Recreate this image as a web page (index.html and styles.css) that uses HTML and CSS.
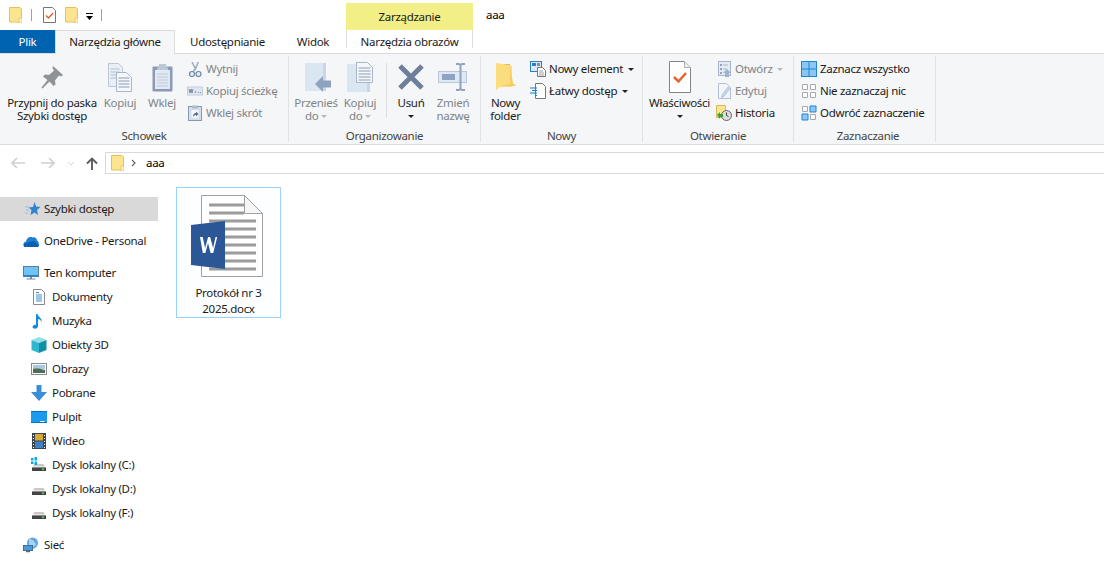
FILE: index.html
```html
<!DOCTYPE html>
<html lang="pl">
<head>
    <meta charset="UTF-8">
    <meta name="viewport" content="width=device-width, initial-scale=1.0">
    <title>aaa</title>
    <link rel="stylesheet" href="styles.css">
</head>
<body>

<svg class="icon-defs" aria-hidden="true">
    <symbol id="folder" viewBox="0 0 13 16">
        <path d="M.5.500h10.500l1.500 1.500v13H.5z" fill="#fde58f" stroke="#e2c063"/>
        <path d="M10 11h3v5h-3z" fill="#fff3c0" stroke="#e2c063" stroke-width=".8"/>
    </symbol>
    <symbol id="props" viewBox="0 0 13 16">
        <path d="M.5.500h9l3 3v12H.5z" fill="#fff" stroke="#777"/>
        <path d="M3 8.500l2.500 2.500L10 6" fill="none" stroke="#e8622c" stroke-width="1.500"/>
    </symbol>
    <symbol id="drive" viewBox="0 0 16 16">
        <path d="M2 9.500l1.500-2.500h9l1.500 2.500z" fill="#c9c9c9"/>
        <path d="M1 10h14v4H1z" fill="#444"/>
        <path d="M1 10h14v1H1z" fill="#8e8e8e"/>
        <path d="M11 11.500h2v1.500h-2z" fill="#5fd35f"/>
    </symbol>
</svg>

<header class="title-bar">
    <div class="qat">
        <svg class="qat-icon"><use href="#folder"/></svg>
        <span class="qat-sep"></span>
        <svg class="qat-icon"><use href="#props"/></svg>
        <svg class="qat-icon"><use href="#folder"/></svg>
        <svg class="qat-more" width="7" height="7" viewBox="0 0 7 7"><path d="M0 0h7v1H0zM0 3h7L3.500 7z" fill="#000"/></svg>
        <span class="qat-sep"></span>
    </div>
    <div class="context-title">Zarządzanie</div>
    <div class="window-title">aaa</div>
</header>

<nav class="tabs">
    <a class="tab tab-file">Plik</a>
    <a class="tab tab-home">Narzędzia główne</a>
    <a class="tab tab-share">Udostępnianie</a>
    <a class="tab tab-view">Widok</a>
    <a class="tab tab-context">Narzędzia obrazów</a>
</nav>

<section class="ribbon">
    <div class="group group-clipboard">
        <div class="group-body">
            <div class="big-btn btn-pin">
                <div class="big-icon">
                    <svg width="24" height="24" viewBox="0 0 24 24"><path d="M13 1l10 9-2 1.500-2-1-4 5 .5 4-2 1.500-4-4.500-7 7-1-1 6-7.500L3 11.500 5 9.500l4 .5 5-4.500-1.500-2.500z" fill="#8d9397"/></svg>
                </div>
                <span class="dark">Przypnij do paska<br>Szybki dostęp</span>
            </div>
            <div class="big-btn btn-copy off">
                <div class="big-icon">
                    <svg width="24" height="29" viewBox="0 0 24 29"><path d="M.5.500h10l4 4v19H.5z" fill="#eaeff6" stroke="#bcc8d8"/><path d="M2.500 6h9M2.500 9h9M2.500 12h9M2.500 15h9" stroke="#b3bfd0"/><path d="M8.500 9.500h10l5 5v14h-15z" fill="#f4f7fb" stroke="#a9b6c9"/><path d="M10.500 15h11M10.500 18h11M10.500 21h11M10.500 24h11" stroke="#8d9cb3"/></svg>
                </div>
                <span>Kopiuj</span>
            </div>
            <div class="big-btn btn-paste off">
                <div class="big-icon">
                    <svg width="21" height="29" viewBox="0 0 21 29"><rect x=".5" y="3.500" width="20" height="25" fill="#8b9ab5" rx="1"/><path d="M3 7h15v19H3z" fill="#e3e9f3"/><path d="M5 11h11M5 14h11M5 17h11M5 20h11M5 23h11" stroke="#bccadc"/><path d="M7 4V1h7v3l2 1v2H5V5z" fill="#bcc7d8"/></svg>
                </div>
                <span>Wklej</span>
            </div>
            <div class="small-col off">
                <div class="small-row">
                    <svg width="16" height="16" viewBox="0 0 16 16"><path d="M5 1l3.500 7L11 1.500M11.500 1L8 8 5 13" fill="none" stroke="#9fadc0" stroke-width="1.500"/><circle cx="5" cy="13" r="2.500" fill="#e8edf4" stroke="#6d84a5" stroke-width="1.200"/><circle cx="11.500" cy="13" r="2.500" fill="#e8edf4" stroke="#6d84a5" stroke-width="1.200"/></svg>
                    <span>Wytnij</span>
                </div>
                <div class="small-row">
                    <svg width="16" height="16" viewBox="0 0 16 16"><rect x=".5" y="4" width="15" height="8" fill="#dfe6f0" stroke="#c3cedd"/><path d="M2 6l1 4 1-4 1 4 1-4M8 8l1 2M11 9.500h1M13 9.500h1" fill="none" stroke="#66768f" stroke-width=".8"/></svg>
                    <span>Kopiuj ścieżkę</span>
                </div>
                <div class="small-row">
                    <svg width="16" height="16" viewBox="0 0 16 16"><rect x="1.500" y="1.500" width="13" height="14" fill="#d5deeb" stroke="#8798b3"/><rect x="5" y=".5" width="6" height="3" fill="#aebbcf"/><path d="M4.500 5h7v8h-7z" fill="#f4f7fb"/><path d="M6 12c0-3 1-4 3-4V6.500L11.500 9 9 11.500V10c-1 0-2 .5-3 2z" fill="#5c7190"/></svg>
                    <span>Wklej skrót</span>
                </div>
            </div>
        </div>
        <div class="group-label">Schowek</div>
    </div>

    <div class="group group-organize">
        <div class="group-body">
            <div class="big-btn btn-move off">
                <div class="big-icon">
                    <svg class="icon-move" width="26" height="29" viewBox="0 0 26 29"><path d="M0 0h21v28H0z" fill="#dbe6f3"/><path d="M18 0h3v28h-3z" fill="#c8d6e8"/><path d="M10 21l8-8v4.500h8v7h-8V29z" fill="#8ea3bf"/></svg>
                </div>
                <span>Przenieś<br>do <i class="caret caret-off"></i></span>
            </div>
            <div class="big-btn btn-copyto off">
                <div class="big-icon">
                    <svg width="26" height="30" viewBox="0 0 26 30"><path d="M0 2h23v28H0z" fill="#dbe6f3"/><path d="M20 2h3v28h-3z" fill="#c8d6e8"/><path d="M9.500.5h11l5 5v15h-16z" fill="#f4f7fb" stroke="#a9b6c9"/><path d="M11.500 6h12M11.500 9h12M11.500 12h12M11.500 15h12M11.500 18h12" stroke="#8d9cb3"/></svg>
                </div>
                <span>Kopiuj<br>do <i class="caret caret-off"></i></span>
            </div>
            <span class="inner-sep"></span>
            <div class="big-btn btn-delete">
                <div class="big-icon">
                    <svg width="26" height="26" viewBox="0 0 26 26"><path d="M2 2l22 22M24 2L2 24" stroke="#6f7f9b" stroke-width="5"/></svg>
                </div>
                <span class="dark">Usuń<br><i class="caret"></i></span>
            </div>
            <div class="big-btn btn-rename off">
                <div class="big-icon">
                    <svg width="30" height="28" viewBox="0 0 30 28"><rect x=".5" y="8.500" width="28" height="11" fill="#dfe7f2" stroke="#bac7da"/><rect x="4" y="11" width="13" height="6" fill="#8ea3bf"/><path d="M18 1h3l1.500 1L24 1h3M22.500 2v24M18 27h3l1.500-1 1.500 1h3" fill="none" stroke="#8ea3bf" stroke-width="2"/></svg>
                </div>
                <span>Zmień<br>nazwę</span>
            </div>
        </div>
        <div class="group-label">Organizowanie</div>
    </div>

    <div class="group group-new">
        <div class="group-body">
            <div class="big-btn btn-newfolder">
                <div class="big-icon">
                    <svg width="20" height="28" viewBox="0 0 20 28"><path d="M2 1h12v20H2z" fill="#e9b94f"/><path d="M0 0l12 2 4 1v21l-12 0-4 3z" fill="#fbdc7e"/><path d="M14 2l3 18 3 3H4l10-2z" fill="#f6cd63"/></svg>
                </div>
                <span class="dark">Nowy<br>folder</span>
            </div>
            <div class="small-col">
                <div class="small-row">
                    <svg width="16" height="16" viewBox="0 0 16 16"><rect x=".5" y=".5" width="11" height="10" fill="#dce9f7" stroke="#2d7cc4"/><rect x="2" y="2" width="4" height="3" fill="#2d7cc4"/><rect x="7" y="2" width="3" height="3" fill="#8a8a8a"/><path d="M7.500 6.500h5l3 3v6h-8z" fill="#fff" stroke="#777"/><path d="M9 10h4M9 12h5M9 14h5" stroke="#888" stroke-width=".8"/></svg>
                    <span>Nowy element <i class="caret caret-side"></i></span>
                </div>
                <div class="small-row">
                    <svg width="16" height="16" viewBox="0 0 16 16"><path d="M5.500.5h7l3 3v12h-10z" fill="#fff" stroke="#777"/><path d="M0 5h7M2 7.500h5M0 10h7M5 12.500h2" stroke="#1a76c8" stroke-width="1.200"/></svg>
                    <span>Łatwy dostęp <i class="caret caret-side"></i></span>
                </div>
            </div>
        </div>
        <div class="group-label">Nowy</div>
    </div>

    <div class="group group-open">
        <div class="group-body">
            <div class="big-btn btn-props">
                <div class="big-icon">
                    <svg width="22" height="32" viewBox="0 0 22 32"><path d="M.5.500h15l6 6v25H.5z" fill="#fff" stroke="#858585"/><path d="M15.500.5v6h6" fill="#eee" stroke="#b0b0b0"/><path d="M5 16l4.500 4.500L17 12" fill="none" stroke="#e8622c" stroke-width="2.500"/></svg>
                </div>
                <span class="dark">Właściwości<br><i class="caret"></i></span>
            </div>
            <div class="small-col">
                <div class="small-row off">
                    <svg width="16" height="16" viewBox="0 0 16 16"><rect x="2.500" y=".5" width="12" height="14" fill="#e5ebf3" stroke="#a8b6c9"/><path d="M4 3h2v2H4zM4 7h2v2H4zM4 11h2v2H4z" fill="#8ea3bf"/><path d="M7 4h5M7 8h4" stroke="#a8b6c9"/><path d="M9 16v-4H7l4-4 4 4h-2v4z" fill="#9fb3cd"/></svg>
                    <span>Otwórz <i class="caret caret-side caret-off"></i></span>
                </div>
                <div class="small-row off">
                    <svg width="16" height="16" viewBox="0 0 16 16"><path d="M2.500.5h8l4 4v11h-12z" fill="#f2f5f9" stroke="#b5c1d1"/><path d="M6 12l6-8 2 1.500-6 8-2.500 1z" fill="#c7d6ea" stroke="#9db0c9" stroke-width=".6"/></svg>
                    <span>Edytuj</span>
                </div>
                <div class="small-row">
                    <svg width="16" height="16" viewBox="0 0 16 16"><path d="M.5.500h9v12h-9z" fill="#fde58f" stroke="#d9b95b"/><circle cx="10.500" cy="10.500" r="5" fill="#ddd" stroke="#666"/><path d="M10.500 7.500v3l2 1" fill="none" stroke="#444"/><path d="M1 10l3-3v2h3v3H4v2z" fill="#35a335"/></svg>
                    <span class="dark">Historia</span>
                </div>
            </div>
        </div>
        <div class="group-label">Otwieranie</div>
    </div>

    <div class="group group-select">
        <div class="group-body">
            <div class="small-col">
                <div class="small-row">
                    <svg width="16" height="16" viewBox="0 0 16 16"><rect width="16" height="16" fill="#1f86d6"/><path d="M1 1h6.500v6.500H1zM8.500 1H15v6.500H8.500zM1 8.500h6.500V15H1zM8.500 8.500H15V15H8.500z" fill="#8cc6f3"/></svg>
                    <span class="dark">Zaznacz wszystko</span>
                </div>
                <div class="small-row">
                    <svg width="16" height="16" viewBox="0 0 16 16"><path d="M1.500 1.500h5v5h-5zM9.500 1.500h5v5h-5zM1.500 9.500h5v5h-5zM9.500 9.500h5v5h-5z" fill="#fff" stroke="#a9a9a9"/></svg>
                    <span class="dark">Nie zaznaczaj nic</span>
                </div>
                <div class="small-row">
                    <svg width="16" height="16" viewBox="0 0 16 16"><path d="M1.500 1.500h5v5h-5zM9.500 9.500h5v5h-5z" fill="#fff" stroke="#a9a9a9"/><path d="M9 1h6v6H9zM1 9h6v6H1z" fill="#8cc6f3" stroke="#1f86d6"/></svg>
                    <span class="dark">Odwróć zaznaczenie</span>
                </div>
            </div>
        </div>
        <div class="group-label">Zaznaczanie</div>
    </div>
</section>

<section class="address-row">
    <svg class="nav-arrow" width="14" height="12" viewBox="0 0 14 12"><path d="M6 1L1 6l5 5M1 6h13" fill="none" stroke="#cfcfcf" stroke-width="1.600"/></svg>
    <svg class="nav-arrow" width="14" height="12" viewBox="0 0 14 12"><path d="M8 1l5 5-5 5M13 6H0" fill="none" stroke="#cfcfcf" stroke-width="1.600"/></svg>
    <svg class="nav-chevron" width="8" height="5" viewBox="0 0 8 5"><path d="M1 1l3 3 3-3" fill="none" stroke="#d4d4d4"/></svg>
    <svg class="nav-up" width="12" height="13" viewBox="0 0 12 13"><path d="M1 6.500l5-5 5 5M6 1.500V13" fill="none" stroke="#5c5c5c" stroke-width="1.900"/></svg>
    <div class="address-box">
        <svg class="address-folder"><use href="#folder"/></svg>
        <svg class="address-chevron" width="5" height="8" viewBox="0 0 5 8"><path d="M1 1l3 3-3 3" fill="none" stroke="#666" stroke-width="1.200"/></svg>
        <span>aaa</span>
    </div>
</section>

<main class="content">
    <aside class="sidebar">
        <div class="nav-group">
            <div class="nav-item selected">
                <svg width="16" height="16" viewBox="0 0 16 16"><path d="M9.500 1l1.600 4.500L15.500 6l-3.500 3 1 5-3.500-2.500-4 2.500 1-5-3-2.500 4.500-.5z" fill="#2f83cf"/><path d="M0 6h4M1 9h3M0 12h3" stroke="#8fc0ea"/></svg>
                <span>Szybki dostęp</span>
            </div>
        </div>
        <div class="nav-group">
            <div class="nav-item">
                <svg width="16" height="16" viewBox="0 0 16 16"><path d="M1.500 14C-.5 12 .5 9 3 8.500 3.500 5.500 6.500 3 9.500 4.500c2-1 4.500 .5 4.500 3 2 .5 2.500 4.500.5 6.500z" fill="#1a7dd0"/><path d="M1.500 14c-1-1-1-2-.5-3l9-3 6 4c0 1-.5 1.500-1.500 2z" fill="#0b5fb0"/></svg>
                <span>OneDrive - Personal</span>
            </div>
        </div>
        <div class="nav-group">
            <div class="nav-item">
                <svg width="16" height="16" viewBox="0 0 16 16"><rect x=".5" y="1.500" width="15" height="10" fill="#6fc3f5" stroke="#5d7c96"/><path d="M1 10h14v1.500H1z" fill="#2a83c9"/><path d="M7 12h2v1.500H7zM3.500 13.500h9v1h-9z" fill="#7e8a94"/></svg>
                <span>Ten komputer</span>
            </div>
            <div class="nav-item sub">
                <svg width="16" height="16" viewBox="0 0 16 16"><path d="M2.500.5h8l3 3v12h-11z" fill="#fff" stroke="#8a8a8a"/><path d="M5 3.500h3M5 6h6M5 8h6M5 10h6M5 12h6" stroke="#3b8fd0"/></svg>
                <span>Dokumenty</span>
            </div>
            <div class="nav-item sub">
                <svg width="16" height="16" viewBox="0 0 16 16"><path d="M5 1h1.500c.5 3 5 4 4 8-.5-2-2.500-3-3.500-3v7c0 2-2 3-4 2.500S1 13 3 12c.8-.3 1.500-.3 2 0z" fill="#0f8be0"/></svg>
                <span>Muzyka</span>
            </div>
            <div class="nav-item sub">
                <svg width="16" height="16" viewBox="0 0 16 16"><path d="M8 0l7.500 3L8 6 .5 3z" fill="#8ee0ea"/><path d="M.5 3L8 6v10L.5 13z" fill="#2fb7cf"/><path d="M15.500 3L8 6v10l7.500-3z" fill="#128ea6"/></svg>
                <span>Obiekty 3D</span>
            </div>
            <div class="nav-item sub">
                <svg width="16" height="16" viewBox="0 0 16 16"><rect x=".5" y="2.500" width="15" height="11" fill="#fff" stroke="#8a8a8a"/><path d="M2 4h12v4H2z" fill="#a8c8e4"/><path d="M2 8c4-1 8 0 12 1v3H2z" fill="#4f6d55"/></svg>
                <span>Obrazy</span>
            </div>
            <div class="nav-item sub">
                <svg width="16" height="16" viewBox="0 0 16 16"><path d="M5.500 0h5v7H16l-8 9-8-9h5.500z" fill="#3a8ddb"/></svg>
                <span>Pobrane</span>
            </div>
            <div class="nav-item sub">
                <svg width="16" height="16" viewBox="0 0 16 16"><rect y="2" width="16" height="12" fill="#1a9bf0"/><path d="M0 2h16v1H0zM0 13h16v1H0z" fill="#0c6fc0"/><path d="M9 12.500h4.500" stroke="#fff"/></svg>
                <span>Pulpit</span>
            </div>
            <div class="nav-item sub">
                <svg width="16" height="16" viewBox="0 0 16 16"><rect x="1" y="0" width="14" height="16" fill="#3c4650"/><path d="M4 1h8v6.500H4z" fill="#d8a830"/><path d="M4 8.500h8V15H4z" fill="#3f82c9"/><path d="M2 2h1v1H2zM2 5h1v1H2zM2 8h1v1H2zM2 11h1v1H2zM2 14h1v1H2zM13 2h1v1h-1zM13 5h1v1h-1zM13 8h1v1h-1zM13 11h1v1h-1zM13 14h1v1h-1z" fill="#fff"/></svg>
                <span>Wideo</span>
            </div>
            <div class="nav-item sub">
                <svg width="16" height="16" viewBox="0 0 16 16"><use href="#drive"/><path d="M0 1h2.500v2.500H0zM3.500 0H6v3.500H3.500zM0 4.500h2.500V7H0zM3.500 4.500H6V8H3.500z" fill="#11a7e8"/></svg>
                <span>Dysk lokalny (C:)</span>
            </div>
            <div class="nav-item sub">
                <svg width="16" height="16"><use href="#drive"/></svg>
                <span>Dysk lokalny (D:)</span>
            </div>
            <div class="nav-item sub">
                <svg width="16" height="16"><use href="#drive"/></svg>
                <span>Dysk lokalny (F:)</span>
            </div>
        </div>
        <div class="nav-group">
            <div class="nav-item">
                <svg width="16" height="16" viewBox="0 0 16 16"><circle cx="9.500" cy="6" r="5.500" fill="#5fa6de"/><path d="M6 2c3 0 6 2 7 6l-3 2-4-1z" fill="#a7d4f2"/><rect x=".5" y="8.500" width="9" height="5" fill="#4a9bdc" stroke="#3f6f99"/><path d="M3 14.500h4" stroke="#5a6a78" stroke-width="1.500"/></svg>
                <span>Sieć</span>
            </div>
        </div>
    </aside>

    <div class="files">
        <div class="file-tile">
            <svg class="file-icon" width="74" height="84" viewBox="0 0 74 84">
                <path d="M10.500 .5h43l18 18v63h-61z" fill="#fff" stroke="#a0a0a0"/>
                <path d="M53.500 .5v18h18z" fill="#f6f6f6" stroke="#a0a0a0"/>
                <path d="M18 8.500h35v3H18zM18 16.500h35v3H18zM18 24.500h47v3H18zM18 32.500h47v3H18zM18 40.500h47v3H18zM18 48.500h47v3H18zM18 56.500h47v3H18zM18 64.500h47v3H18zM18 72.500h47v3H18z" fill="#9b9b9b"/>
                <path d="M0 30l34-4v48L0 70z" fill="#2b5796"/>
                <path d="M9 42h2.700l2.400 11 3-11h2l3 11 2.400-11H26.200l-4 16h-2.600l-2.600-10-2.600 10h-2.600z" fill="#fff"/>
            </svg>
            <div class="file-name">Protokół nr 3<br>2025.docx</div>
        </div>
    </div>
</main>

</body>
</html>
```

FILE: styles.css
```css
body {
    font-family: "Noto Sans", sans-serif;
    font-size: 11.5px;
    letter-spacing: -0.3px;
    margin: 0;
    padding: 0;
    color: #1a1a1a;
    background: #fff;
    height: 572px;
    overflow: hidden;
}

.icon-defs {
    display: none;
}

/* title bar */

.title-bar {
    display: flex;
    height: 30px;
}

.qat {
    display: flex;
    align-items: center;
    width: 346px;
    padding-left: 9px;
    box-sizing: border-box;
}

.qat-icon {
    width: 13px;
    height: 16px;
    margin-right: 9px;
}

.qat-sep {
    width: 1px;
    height: 12px;
    background: #a0a0a0;
    margin-right: 11px;
}

.qat-more {
    margin: 2px 8px 0 -1px;
}

.context-title {
    width: 127px;
    height: 27px;
    margin-top: 3px;
    background: #f1ef85;
    text-align: center;
    line-height: 28px;
}

.window-title {
    margin-left: 13px;
    line-height: 30px;
    color: #000;
}

/* tabs */

.tabs {
    display: flex;
    height: 23px;
    line-height: 23px;
    text-align: center;
}

.tab {
    display: block;
    box-sizing: border-box;
}

.tab-file {
    width: 55px;
    background: #0063b1;
    color: #fff;
}

.tab-home {
    width: 120px;
    height: 24px;
    background: #f5f6f7;
    border: 1px solid #dadbdc;
    border-bottom: 0;
    line-height: 22px;
    position: relative;
    z-index: 1;
}

.tab-share {
    width: 105px;
}

.tab-view {
    width: 66px;
}

.tab-context {
    width: 127px;
    height: 18px;
    line-height: 24px;
    border-left: 1px solid #dadbdc;
    border-right: 1px solid #dadbdc;
}

/* ribbon */

.ribbon {
    display: flex;
    height: 92px;
    box-sizing: border-box;
    padding-top: 2px;
    background: #f5f6f7;
    border-top: 1px solid #dadbdc;
    border-bottom: 1px solid #dadbdc;
    color: #7f8388;
}

.group {
    display: flex;
    flex-direction: column;
    box-sizing: border-box;
    height: 86px;
    border-right: 1px solid #e1e2e3;
}

.group-clipboard { width: 289px; }
.group-organize { width: 192px; }
.group-new { width: 162px; }
.group-open { width: 151px; }
.group-select { width: 142px; padding-left: 7px; }

.group-body {
    display: flex;
    align-items: flex-start;
    height: 72px;
    padding-top: 2px;
    box-sizing: border-box;
    line-height: 13px;
}

.group-label {
    height: 14px;
    line-height: 16px;
    text-align: center;
    color: #444;
}

.big-btn {
    display: flex;
    flex-direction: column;
    align-items: center;
    text-align: center;
    white-space: nowrap;
}

.big-icon {
    display: flex;
    align-items: center;
    justify-content: center;
    height: 36px;
    margin: 1px 0;
}

.icon-move {
    margin-left: 4px;
}

.dark {
    color: #1a1a1a;
}

.off {
    color: #808488;
}

.btn-pin { width: 102px; margin-left: 1px; }
.btn-copy { width: 34px; }
.btn-paste { width: 50px; }
.btn-move { width: 44px; margin-left: 5px; }
.btn-copyto { width: 44px; }
.btn-delete { width: 48px; }
.btn-rename { width: 36px; }
.btn-newfolder { width: 49px; }
.btn-props { width: 73px; }

.inner-sep {
    width: 1px;
    height: 55px;
    margin: 5px 0 0 4px;
    background: #dcdddf;
}

.small-col {
    display: flex;
    flex-direction: column;
}

.small-row {
    display: flex;
    align-items: center;
    gap: 3px;
    height: 22px;
    white-space: nowrap;
}

.small-row span {
    padding-bottom: 2px;
}

.group-new .small-row,
.group-open .small-row {
    color: #1a1a1a;
}

.group-open .small-row.off {
    color: #808488;
}

.caret {
    display: inline-block;
    width: 0;
    height: 0;
    border-left: 3px solid transparent;
    border-right: 3px solid transparent;
    border-top: 3px solid #222;
    vertical-align: middle;
}

.caret-side {
    margin-left: 2px;
}

.caret-off {
    border-top-color: #b8b8b8;
}

/* address row */

.address-row {
    display: flex;
    align-items: center;
    height: 36px;
    padding: 0 0 0 11px;
    box-sizing: border-box;
}

.nav-arrow {
    margin-right: 16px;
}

.nav-chevron {
    margin: 0 11px 0 -4px;
}

.nav-up {
    margin-right: 7px;
}

.address-box {
    display: flex;
    align-items: center;
    flex: 1;
    height: 22px;
    box-sizing: border-box;
    border: 1px solid #d9d9d9;
    border-right: 0;
    padding-left: 5px;
    color: #000;
}

.address-box span {
    padding-bottom: 2px;
}

.address-folder {
    width: 13px;
    height: 16px;
}

.address-chevron {
    margin: 0 10px 0 7px;
}

/* main */

.content {
    display: flex;
    height: 391px;
}

.sidebar {
    width: 158px;
    flex: none;
    padding-top: 16px;
}

.nav-group {
    margin-bottom: 8px;
}

.nav-item {
    display: flex;
    align-items: center;
    gap: 5px;
    height: 24px;
    padding-left: 23px;
    white-space: nowrap;
}

.nav-item span {
    padding-bottom: 2px;
}

.nav-item.sub {
    padding-left: 31px;
    gap: 5px;
}

.nav-item.selected {
    background: #d9d9d9;
    padding-left: 25px;
    gap: 3px;
}

.files {
    padding: 6px 0 0 18px;
}

.file-tile {
    display: flex;
    flex-direction: column;
    align-items: center;
    width: 105px;
    height: 131px;
    box-sizing: border-box;
    border: 1px solid #99d1ff;
    background: #fcfeff;
    padding-top: 7px;
}

.file-icon {
    margin-left: -1px;
}

.file-name {
    margin-top: 6px;
    line-height: 16px;
    text-align: center;
    color: #1a1a1a;
}
```
